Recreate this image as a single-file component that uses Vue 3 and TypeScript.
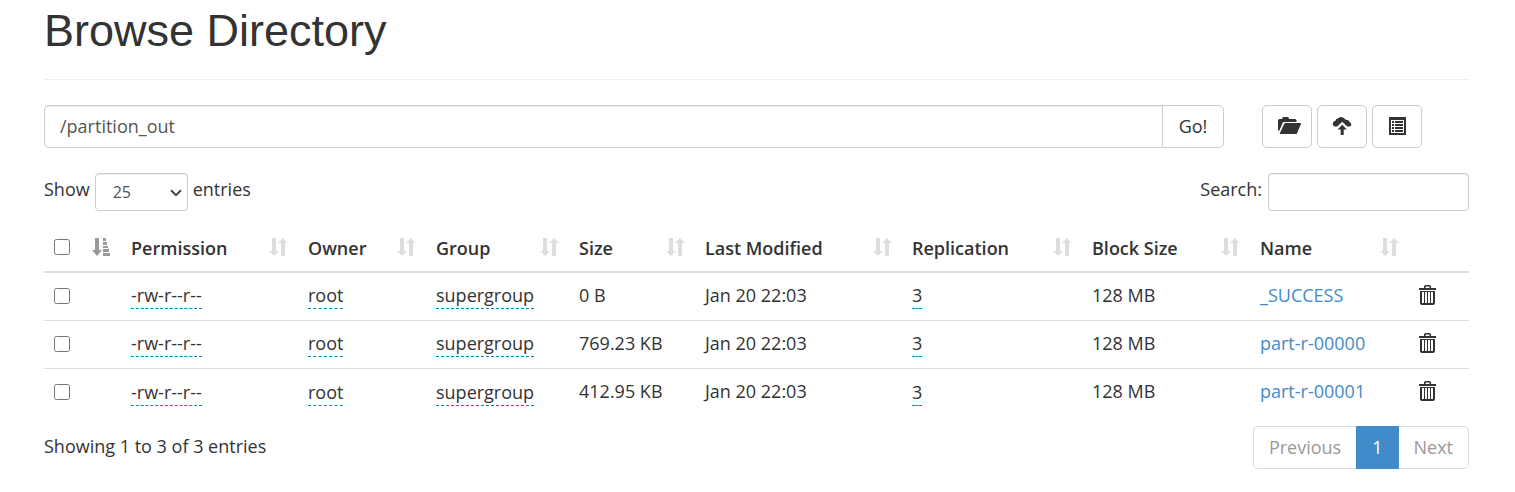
<script setup lang="ts">
import { ref } from 'vue'

interface FileEntry {
  permission: string
  owner: string
  group: string
  size: string
  modified: string
  replication: number
  blockSize: string
  name: string
}

const directory = ref('/partition_out')
const pageSize = ref('25')
const search = ref('')
const selected = ref<string[]>([])

const headings = ['Permission', 'Owner', 'Group', 'Size', 'Last Modified', 'Replication', 'Block Size', 'Name']

const common = { permission: '-rw-r--r--', owner: 'root', group: 'supergroup', modified: 'Jan 20 22:03', replication: 3, blockSize: '128 MB' }
const files: FileEntry[] = [
  { ...common, size: '0 B', name: '_SUCCESS' },
  { ...common, size: '769.23 KB', name: 'part-r-00000' },
  { ...common, size: '412.95 KB', name: 'part-r-00001' },
]

function toggleAll(event: Event) {
  selected.value = (event.target as HTMLInputElement).checked ? files.map((f) => f.name) : []
}
</script>

<template>
  <main class="page">
    <header class="page-header">
      <h1>Browse Directory</h1>
    </header>

    <div class="path-row">
      <form class="path-form" @submit.prevent>
        <input v-model="directory" class="path-input" type="text" aria-label="Directory" />
        <button class="go" type="submit">Go!</button>
      </form>
      <div class="tools">
        <button class="tool" type="button" aria-label="Create directory">
          <svg width="18" height="18" viewBox="0 0 18 18" aria-hidden="true">
            <path d="M0 13V3.500Q0 2 1.500 2H4l.6-1.300Q4.900 0 5.600 0h4q.7 0 1 .7l.6 1.300h5.800q1.500 0 1.500 1.500V5H6.200Q5 5 4.500 6.100L1.200 14z" />
            <path d="M7.500 6h15q.8 0 .5.8l-3.900 9.500q-.3.700-1.100.700H2.300q-.8 0-.5-.7L6.300 6.700Q6.700 6 7.500 6z" />
          </svg>
        </button>
        <button class="tool" type="button" aria-label="Upload files">
          <svg width="18" height="18" viewBox="0 0 18 18" aria-hidden="true">
            <path d="M1.500 9.500Q-.4 8.500-.3 6.500 0 4.200 2.300 3.700 2.900 1.500 5.200 1.300 7-.2 9.200.2 11.700.7 12.600 2.700 15.800 2.500 16.600 4.900 18.500 5.700 18.300 7.700 18 9.500 16 9.600H14.300L9.200 4.800 4.300 9.500z" />
            <path d="M9.200 7.800l4.600 4.700h-3.100V18h-3v-5.500H4.600z" />
          </svg>
        </button>
        <button class="tool" type="button" aria-label="Cut and paste">
          <svg width="18" height="18" viewBox="0 0 18 18" aria-hidden="true">
            <path fill-rule="evenodd" d="M1 0h17v18H1zM3 3v13h13V3z" />
            <path d="M4 4h2v2H4zM7 4h8v2H7zM4 7h2v2H4zM7 7h8v2H7zM4 10h2v2H4zM7 10h8v2H7zM4 13h2v2H4zM7 13h8v2H7z" />
          </svg>
        </button>
      </div>
    </div>

    <div class="controls">
      <label class="length">
        Show
        <span class="select-box">
          <select v-model="pageSize">
            <option>25</option>
            <option>50</option>
            <option>100</option>
          </select>
          <svg class="chevron" width="12" height="8" viewBox="0 0 12 8" aria-hidden="true">
            <path d="M1 1.200l5 5 5-5" />
          </svg>
        </span>
        entries
      </label>
      <label class="search">
        Search:
        <input v-model="search" type="search" />
      </label>
    </div>

    <table>
      <colgroup>
        <col class="c-check" />
        <col class="c-permission" />
        <col class="c-owner" />
        <col class="c-group" />
        <col class="c-size" />
        <col class="c-modified" />
        <col class="c-replication" />
        <col class="c-block" />
        <col class="c-name" />
        <col class="c-action" />
      </colgroup>
      <thead>
        <tr>
          <th>
            <div class="heading">
              <input type="checkbox" aria-label="Select all" @change="toggleAll" />
              <svg class="sort active" width="19" height="18" viewBox="0 0 19 18" aria-hidden="true">
                <path d="M3 0h4v12h3l-5 6-5-6h3zM11 0h3v3h-3zM11 4h4v3h-4zM11 8h5v2h-5zM11 11h6v3h-6zM11 15h7v3h-7z" />
              </svg>
            </div>
          </th>
          <th v-for="heading in headings" :key="heading">
            <div class="heading">
              <span>{{ heading }}</span>
              <svg class="sort" width="19" height="18" viewBox="0 0 19 18" aria-hidden="true">
                <path d="M3 0h4v13h3l-5 5-5-5h3zM12 18V5H9l5-5 5 5h-3v13z" />
              </svg>
            </div>
          </th>
          <th></th>
        </tr>
      </thead>
      <tbody>
        <tr v-for="file in files" :key="file.name">
          <td class="boxed"><input v-model="selected" type="checkbox" :value="file.name" :aria-label="'Select ' + file.name" /></td>
          <td class="boxed"><span class="editable">{{ file.permission }}</span></td>
          <td class="boxed"><span class="editable">{{ file.owner }}</span></td>
          <td class="boxed"><span class="editable">{{ file.group }}</span></td>
          <td>{{ file.size }}</td>
          <td>{{ file.modified }}</td>
          <td class="boxed"><span class="editable">{{ file.replication }}</span></td>
          <td>{{ file.blockSize }}</td>
          <td><a href="#">{{ file.name }}</a></td>
          <td>
            <button class="trash" type="button" :aria-label="'Delete ' + file.name">
              <svg width="17" height="20" viewBox="0 0 17 20" aria-hidden="true">
                <path fill-rule="evenodd" d="M5 3V1.500Q5 0 6.500 0h4Q12 0 12 1.500V3h5v2H0V3zM6.500 3h4V1.500h-4z" />
                <path fill-rule="evenodd" d="M1 6h15v12q0 2-2 2H3q-2 0-2-2zM3 7v11h2V7zM6 7v11h2V7zM9 7v11h2V7zM12 7v11h2V7z" />
              </svg>
            </button>
          </td>
        </tr>
      </tbody>
    </table>

    <footer class="table-footer">
      <div class="summary">Showing 1 to 3 of 3 entries</div>
      <nav class="pagination" aria-label="Pages">
        <button type="button">Previous</button>
        <button type="button" class="current" aria-current="page">1</button>
        <button type="button">Next</button>
      </nav>
    </footer>
  </main>
</template>

<style>
body {
  background: #fff;
}
</style>

<style scoped>
.page,
.page * {
  box-sizing: border-box;
}

.page {
  padding: 6px 46px 20px 44px;
  color: #333;
  font-family: 'Open Sans', 'Noto Sans', sans-serif;
  font-size: 18px;
  line-height: 26px;
}

button,
input,
select {
  font: inherit;
  color: inherit;
  margin: 0;
}

button {
  cursor: pointer;
}

svg {
  display: block;
  flex: none;
  overflow: visible;
  fill: currentColor;
}

.page-header {
  padding-bottom: 23px;
  border-bottom: 1px solid #eee;
}

h1 {
  margin: 0;
  font-family: 'Liberation Sans', Arial, sans-serif;
  font-size: 45px;
  font-weight: 400;
  line-height: 50px;
}

.path-row {
  display: flex;
  gap: 38px;
  margin-top: 25px;
}

.path-form {
  display: flex;
  flex: 1;
  min-width: 0;
}

.path-input {
  flex: 1;
  min-width: 0;
  height: 43px;
  padding: 0 15px 2px;
  border: 1px solid #ccc;
  border-right: 0;
  border-radius: 5px 0 0 5px;
  box-shadow: inset 0 1px 1px rgba(0, 0, 0, 0.08);
  color: #555;
}

.go {
  width: 62px;
  padding: 0 0 2px;
  border: 1px solid #ccc;
  border-radius: 0 5px 5px 0;
  background: #fff;
}

.tools {
  display: flex;
  gap: 5px;
  width: 207px;
}

.tool {
  display: flex;
  align-items: center;
  justify-content: center;
  width: 50px;
  height: 43px;
  padding: 0 0 2px;
  border: 1px solid #ccc;
  border-radius: 5px;
  background: #fff;
}

.controls {
  display: flex;
  justify-content: space-between;
  margin-top: 25px;
}

.length,
.search {
  display: flex;
  gap: 6px;
  line-height: 32px;
}

.length {
  gap: 5px;
}

.select-box {
  position: relative;
}

.length select {
  display: block;
  appearance: none;
  width: 93px;
  height: 38px;
  padding: 0 28px 0 17px;
  border: 1px solid #ccc;
  border-radius: 4px;
  background-color: #fff;
  box-shadow: inset 0 1px 1px rgba(0, 0, 0, 0.08);
  color: #555;
  font-size: 16px;
}

.chevron {
  position: absolute;
  top: 16px;
  right: 6px;
  fill: none;
  stroke: #444;
  stroke-width: 2;
  pointer-events: none;
}

.search input {
  width: 201px;
  height: 38px;
  padding: 0 12px;
  border: 1px solid #ccc;
  border-radius: 4px;
  box-shadow: inset 0 1px 1px rgba(0, 0, 0, 0.08);
  font-size: 16px;
}

table {
  width: 100%;
  margin-top: 13px;
  border-collapse: separate;
  border-spacing: 0;
  table-layout: fixed;
}

.c-check { width: 77px; }
.c-permission { width: 177px; }
.c-owner { width: 128px; }
.c-group { width: 143px; }
.c-size { width: 126px; }
.c-modified { width: 207px; }
.c-replication { width: 180px; }
.c-block { width: 168px; }
.c-name { width: 159px; }
.c-action { width: 60px; }

th,
td {
  padding: 0 10px;
  text-align: left;
  white-space: nowrap;
}

th {
  height: 49px;
  padding-bottom: 2px;
  border-bottom: 2px solid #ddd;
  font-weight: 600;
}

td {
  height: 48px;
  padding-bottom: 4px;
  border-bottom: 1px solid #ddd;
}

.boxed {
  padding-bottom: 2px;
}

tbody tr:last-child td {
  border-bottom: 0;
}

.heading {
  display: flex;
  align-items: center;
  justify-content: space-between;
}

.heading span {
  padding-top: 2px;
}

.sort {
  color: #ddd;
}

.sort.active {
  color: #999;
}

input[type='checkbox'] {
  display: block;
  width: 16px;
  height: 16px;
}

.editable {
  display: inline-block;
  border-bottom: 1px dashed #08c;
}

a {
  color: #428bca;
  text-decoration: none;
}

.trash {
  display: block;
  padding: 0;
  border: 0;
  background: none;
}

.table-footer {
  display: flex;
  justify-content: space-between;
  align-items: center;
  margin-top: 9px;
}

.summary {
  padding-bottom: 4px;
}

.pagination {
  display: flex;
}

.pagination button {
  height: 43px;
  padding: 0 15px 2px;
  border: 1px solid #ddd;
  background: #fff;
  color: #999;
}

.pagination button:first-child {
  border-right: 0;
  border-radius: 5px 0 0 5px;
}

.pagination button:last-child {
  border-left: 0;
  border-radius: 0 5px 5px 0;
}

.pagination .current {
  border-color: #428bca;
  background: #428bca;
  color: #fff;
}
</style>
